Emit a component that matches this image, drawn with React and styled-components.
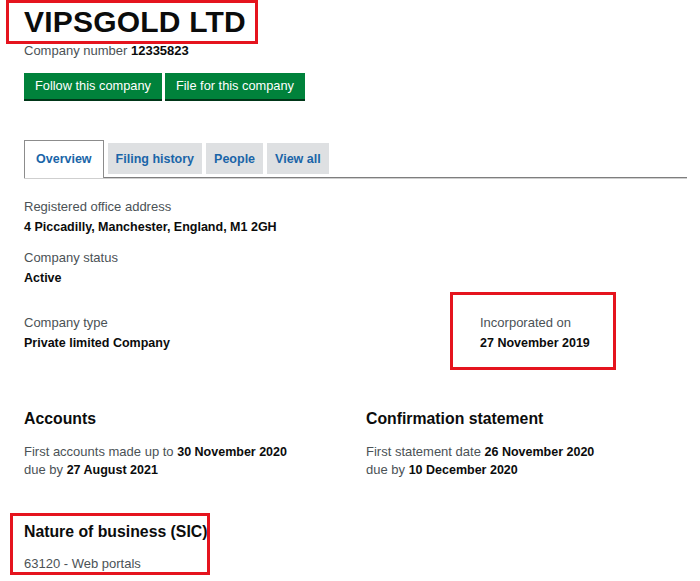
import React from "react";
import styled, { createGlobalStyle } from "styled-components";

const GlobalStyle = createGlobalStyle`
  html, body { margin: 0; padding: 0; background: #ffffff; }
  body {
    font-family: "Liberation Sans", Arial, sans-serif;
    color: #0b0c0c;
  }
`;

const Page = styled.div`
  width: 700px;
  min-height: 581px;
  box-sizing: border-box;
  padding: 0 13px 8px 24px;
`;

const Header = styled.header`
  position: relative;
`;

const Highlight = styled.div`
  position: absolute;
  box-sizing: border-box;
  border: 3px solid #e5141e;
  pointer-events: none;
`;

const Title = styled.h1`
  margin: 0;
  padding-top: 4px;
  font-size: 30px;
  line-height: 36px;
  font-weight: 700;
  letter-spacing: 0.2px;
`;

const CompanyNumber = styled.p`
  margin: 3px 0 0;
  font-size: 13px;
  line-height: 16px;
  color: #4b5256;
  strong { color: #0b0c0c; font-weight: 700; }
`;

const ButtonRow = styled.div`
  display: flex;
  gap: 3px;
  margin-top: 14px;
`;

const Button = styled.button`
  font-family: inherit;
  font-size: 12.8px;
  line-height: 16px;
  color: #ffffff;
  background: #00823b;
  border: 0;
  border-radius: 0;
  padding: 5px 11px;
  box-shadow: 0 2px 0 #003618;
  cursor: pointer;
`;

const TabList = styled.nav`
  display: flex;
  align-items: flex-end;
  gap: 3px;
  margin-top: 41px;
  border-bottom: 1px solid #7e7e7e;
  box-shadow: 0 1px 0 #cfcfcf;
`;

const Tab = styled.a`
  display: block;
  font-size: 12.5px;
  line-height: 16px;
  font-weight: 700;
  color: #1a65a8;
  text-decoration: none;
  box-sizing: border-box;
  ${(p) =>
    p.$active
      ? `
    background: #ffffff;
    border: 1px solid #8c8c8c;
    border-bottom: 0;
    padding: 10px 11px 11px;
    margin-bottom: -1px;
  `
      : `
    background: #dee0e2;
    padding: 8px 8px 7px;
    margin-bottom: 3px;
    margin-left: 1px;
  `}
`;

const Overview = styled.section`
  padding-top: 21px;
`;

const Field = styled.div`
  position: relative;
  margin-bottom: ${(p) => p.$after || 0}px;
`;

const Label = styled.div`
  font-size: 13px;
  line-height: 16px;
  color: #4b5256;
  margin-bottom: 4px;
`;

const Value = styled.div`
  font-size: 12.5px;
  line-height: 16px;
  font-weight: 700;
  color: #0b0c0c;
`;

const TwoCol = styled.div`
  display: grid;
  grid-template-columns: ${(p) => p.$first}px 1fr;
  margin-bottom: ${(p) => p.$after || 0}px;
`;

const Block = styled.div`
  position: relative;
`;

const Heading = styled.h2`
  margin: 0 0 ${(p) => p.$gap || 14}px;
  font-size: 15.8px;
  line-height: 20px;
  font-weight: 700;
  color: #0b0c0c;
`;

const Text = styled.p`
  margin: 0;
  font-size: 13px;
  line-height: 17px;
  color: #4b5256;
  strong { color: #0b0c0c; font-weight: 700; font-size: 12.5px; }
`;

export default function App() {
  return (
    <>
      <GlobalStyle />
      <Page>
        <Header>
          <Highlight style={{ left: -18, top: 0, width: 252, height: 44 }} />
          <Title>VIPSGOLD LTD</Title>
          <CompanyNumber>
            Company number <strong>12335823</strong>
          </CompanyNumber>
          <ButtonRow>
            <Button>Follow this company</Button>
            <Button>File for this company</Button>
          </ButtonRow>
        </Header>

        <TabList>
          <Tab $active href="#">Overview</Tab>
          <Tab href="#">Filing history</Tab>
          <Tab href="#">People</Tab>
          <Tab href="#">View all</Tab>
        </TabList>

        <Overview>
          <Field $after={15}>
            <Label>Registered office address</Label>
            <Value>4 Piccadilly, Manchester, England, M1 2GH</Value>
          </Field>
          <Field $after={29}>
            <Label>Company status</Label>
            <Value>Active</Value>
          </Field>
          <TwoCol $first={456} $after={58}>
            <Field>
              <Label>Company type</Label>
              <Value>Private limited Company</Value>
            </Field>
            <Field>
              <Highlight style={{ left: -30, top: -23, width: 166, height: 78 }} />
              <Label>Incorporated on</Label>
              <Value>27 November 2019</Value>
            </Field>
          </TwoCol>
          <TwoCol $first={342} $after={43}>
            <Block>
              <Heading>Accounts</Heading>
              <Text>
                First accounts made up to <strong>30 November 2020</strong>
                <br />
                due by <strong>27 August 2021</strong>
              </Text>
            </Block>
            <Block>
              <Heading>Confirmation statement</Heading>
              <Text>
                First statement date <strong>26 November 2020</strong>
                <br />
                due by <strong>10 December 2020</strong>
              </Text>
            </Block>
          </TwoCol>
          <Block>
            <Highlight style={{ left: -14, top: -9, width: 200, height: 62 }} />
            <Heading $gap={13}>Nature of business (SIC)</Heading>
            <Text>63120 - Web portals</Text>
          </Block>
        </Overview>
      </Page>
    </>
  );
}
